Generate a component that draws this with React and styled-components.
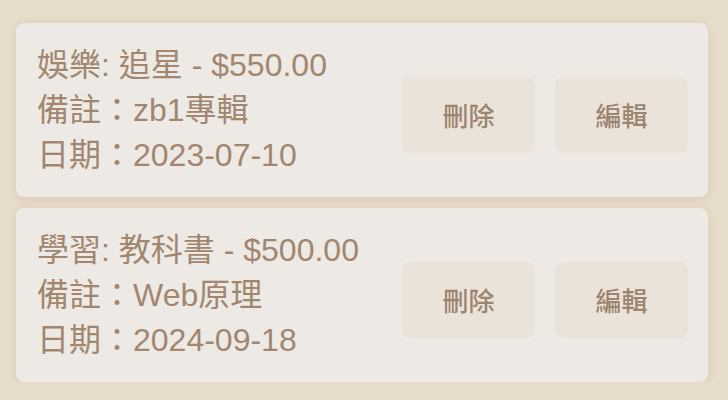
import styled, { createGlobalStyle } from 'styled-components';

const GlobalStyle = createGlobalStyle`
  html, body {
    margin: 0;
    padding: 0;
    background: #e8dcca;
    font-family: "Liberation Sans", Arial, "Noto Sans CJK TC", sans-serif;
  }
`;

const records = [
  { id: 1, category: '娛樂', item: '追星', amount: 550, note: 'zb1專輯', date: '2023-07-10' },
  { id: 2, category: '學習', item: '教科書', amount: 500, note: 'Web原理', date: '2024-09-18' },
];

const App = () => {
  return (
    <>
      <GlobalStyle />
      <List lang='zh-TW'>
        {records.map((r) => (
          <Card key={r.id}>
            <Info>
              <Line>
                {r.category}: {r.item} - ${r.amount.toFixed(2)}
              </Line>
              <Line>備註：{r.note}</Line>
              <Line>日期：{r.date}</Line>
            </Info>
            <Actions>
              <ActionButton type='button'>刪除</ActionButton>
              <ActionButton type='button'>編輯</ActionButton>
            </Actions>
          </Card>
        ))}
      </List>
    </>
  );
};

const List = styled.div`
  display: flex;
  flex-direction: column;
  gap: 11px;
  padding: 23px 20px 0 16px;
`;

const Card = styled.div`
  display: flex;
  align-items: center;
  justify-content: space-between;
  padding: 20px 20px 19px 21px;
  background-color: #edeae5;
  border-radius: 8px;
  box-shadow: 0 2px 8px rgba(150, 120, 90, 0.18);
`;

const Info = styled.div`
  display: flex;
  flex-direction: column;
`;

const Line = styled.div`
  font-size: 32px;
  line-height: 45px;
  color: #a2866f;
  white-space: nowrap;
`;

const Actions = styled.div`
  display: flex;
  gap: 20px;
  margin-top: 8px;
`;

const ActionButton = styled.button`
  width: 133px;
  height: 76px;
  border: none;
  border-radius: 8px;
  background-color: #ebe3da;
  color: #9c8470;
  font-family: "Liberation Sans", Arial, "Noto Sans CJK TC", sans-serif;
  font-size: 26px;
  font-weight: 500;
  cursor: pointer;
`;

export default App;
